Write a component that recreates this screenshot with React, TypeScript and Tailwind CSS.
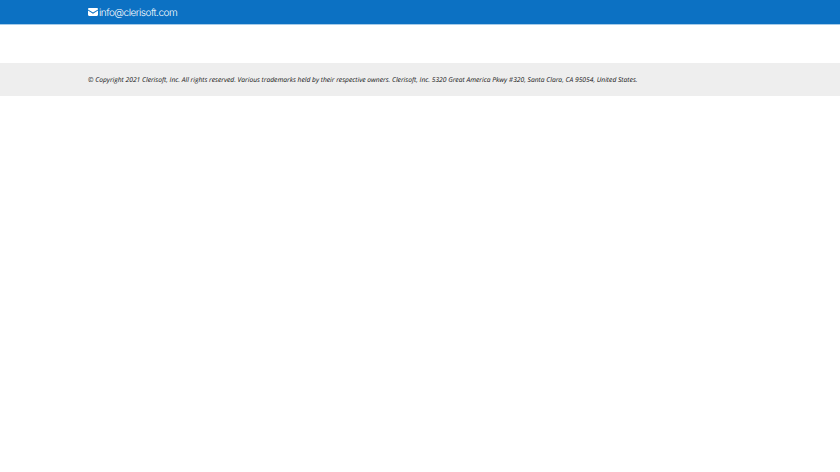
export default function App() {
  return (
    <div className="min-h-[472px] bg-white font-['Open_Sans',sans-serif] [text-rendering:geometricPrecision]">
      <header className="h-[25px] bg-[#0c71c3] border-b border-[#a5cbe9]">
        <div className="pl-[88px] flex items-center h-6 text-white">
          <svg width="10" height="8" viewBox="0 0 10 8" className="mb-[1px] shrink-0" fill="currentColor">
            <path d="M0 1.2C0 .5.5 0 1.2 0h7.6C9.5 0 10 .5 10 1.2v.2L5 4.5 0 1.4v-.2z" />
            <path d="M0 2.6 5 5.7l5-3.1v4.2c0 .7-.5 1.2-1.2 1.2H1.2C.5 8 0 7.5 0 6.8V2.6z" />
          </svg>
          <span className="ml-[1px] mt-[1px] text-[10px] font-light leading-none tracking-[-0.5px] font-['Inter',sans-serif]">info@clerisoft.com</span>
        </div>
      </header>
      <div className="h-[38px]" />
      <footer className="h-[33px] bg-[#eeeeee] flex items-center pl-[88px] pt-[2px]">
        <p className="text-[6.7px] italic text-[#111] leading-none whitespace-nowrap">
          © Copyright 2021 Clerisoft, Inc. All rights reserved. Various trademarks held by their respective owners. Clerisoft, Inc. 5320 Great America Pkwy #320, Santa Clara, CA 95054, United States.
        </p>
      </footer>
    </div>
  );
}
